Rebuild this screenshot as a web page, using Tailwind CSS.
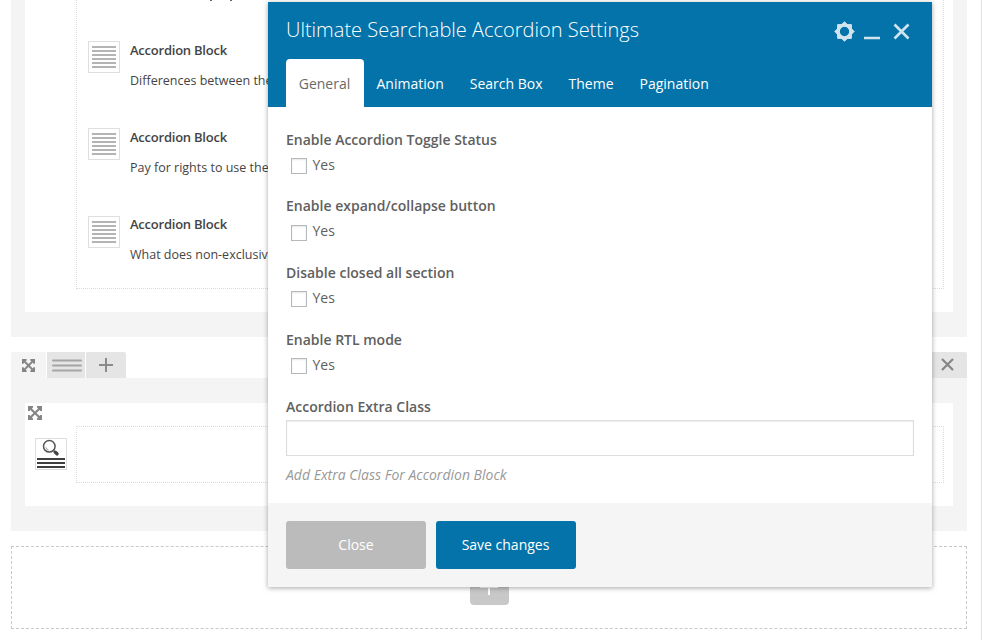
<!DOCTYPE html>
<html lang="en">
<head>
<meta charset="utf-8">
<title>Ultimate Searchable Accordion Settings</title>
<script src="https://cdn.jsdelivr.net/npm/@tailwindcss/browser@4"></script>
</head>
<body class="bg-white">
<svg class="hidden" aria-hidden="true">
  <symbol id="lines" viewBox="0 0 24 22"><path d="M0 1h24M0 5h24M0 9h24M0 13h24M0 17h24M0 21h24" stroke="#b4b4b4" stroke-width="2"/></symbol>
  <symbol id="move" viewBox="0 0 14 14"><path d="M0 0h5v1.600L3.900 2.400 7 5.500l3.100-3.100L9 1.600V0h5v5h-1.600l-.8-1.100L8.500 7l3.100 3.100.8-1.100H14v5H9v-1.600l1.100-.8L7 8.500l-3.100 3.100 1.100.8V14H0V9h1.600l.8 1.100L5.500 7 2.400 3.900 1.600 5H0z" fill="#858585"/></symbol>
</svg>
<div class="relative h-[640px] w-[983px] overflow-hidden font-['Open_Sans','Noto_Sans',sans-serif] text-[#444]">
  <main class="flex h-[640px] w-[982px] flex-col border-r border-[#e2e2e2] pr-[14px] pl-[11px]">
    <!-- Accordion row -->
    <section class="h-[337px] shrink-0 bg-[#f4f4f4] px-[14px] pb-[25px]">
      <div class="h-[312px] bg-white pr-[9px] pl-[51px]">
        <div class="h-[289px] border border-t-0 border-dotted border-[#dcdcdc] pl-[11px]">
          <div class="flex h-[41px] items-start gap-[18px] pl-[122px]"><i class="h-px w-[2px] bg-[#666]"></i><i class="h-px w-[2px] bg-[#666]"></i></div>
          <article class="flex h-[87px] gap-[10px]">
            <span class="flex size-8 shrink-0 items-center justify-center border border-[#dedede]"><svg class="h-[22px] w-6"><use href="#lines"/></svg></span>
            <div class="text-[13px] leading-5 whitespace-nowrap"><h4 class="-mt-px mb-[11px] font-semibold tracking-[-0.018em] text-[#444]">Accordion Block</h4><p class="text-[12.500px]">Differences between the</p></div>
          </article>
          <article class="flex h-[87px] gap-[10px]">
            <span class="flex size-8 shrink-0 items-center justify-center border border-[#dedede]"><svg class="h-[22px] w-6"><use href="#lines"/></svg></span>
            <div class="text-[13px] leading-5 whitespace-nowrap"><h4 class="-mt-px mb-[11px] font-semibold tracking-[-0.018em] text-[#444]">Accordion Block</h4><p class="text-[12.500px]">Pay for rights to use the</p></div>
          </article>
          <article class="flex gap-[10px]">
            <span class="mt-px flex size-8 shrink-0 items-center justify-center border border-[#dedede]"><svg class="h-[22px] w-6"><use href="#lines"/></svg></span>
            <div class="text-[13px] leading-5 whitespace-nowrap"><h4 class="-mt-px mb-[11px] font-semibold tracking-[-0.018em] text-[#444]">Accordion Block</h4><p class="text-[12.500px]">What does non-exclusiv</p></div>
          </article>
        </div>
      </div>
    </section>
    <!-- Search row controls -->
    <div class="mt-[15px] flex h-[26px] shrink-0 gap-px">
      <span class="flex w-[35px] items-center justify-center rounded-t-[2px] bg-[#f4f4f4]"><svg class="size-[13px]"><use href="#move"/></svg></span>
      <span class="flex w-[38px] items-center justify-center bg-[#e5e5e5]"><svg class="ml-[2px] h-[13px] w-[30px]" viewBox="0 0 30 13"><path d="M1 1.500h28M1 6.500h28M1 11.500h28" stroke="#a5a5a5" stroke-width="2" stroke-linecap="round"/></svg></span>
      <span class="flex w-10 items-center justify-center rounded-tr-[2px] bg-[#e5e5e5]"><svg class="size-[14px]" viewBox="0 0 14 14"><path d="M7 0v14M0 7h14" stroke="#8b8b8b" stroke-width="2"/></svg></span>
      <span class="ml-auto flex w-10 items-center justify-center rounded-t-[2px] bg-[#e5e5e5]"><svg class="-mt-px size-[13px]" viewBox="0 0 13 13"><path d="M1 1l11 11M12 1 1 12" stroke="#858585" stroke-width="2.200"/></svg></span>
    </div>
    <section class="h-[153px] shrink-0 bg-[#f4f4f4] px-[14px] pt-[25px]">
      <div class="flex h-[103px] bg-white pr-[9px]">
        <div class="w-[51px] pt-[3px] pl-[3px]">
          <svg class="size-[14px]"><use href="#move"/></svg>
          <span class="mt-[18px] ml-[7px] block size-8 border border-[#dedede]"><svg class="size-[30px]" viewBox="0 0 30 30" fill="none"><circle cx="13.300" cy="7.300" r="5.800" stroke="#555" stroke-width="1.500"/><path d="M9.800 8.300q.7 2 2.700 2.700" stroke="#999"/><path d="m17.500 11.500 1.500 1.500" stroke="#555" stroke-width="1.300"/><path d="m19.300 13.300 1.700 1.500" stroke="#444" stroke-width="3.500" stroke-linecap="round"/><path d="M1 20h28M1 24h28M1 28h28" stroke="#3f3f3f" stroke-width="2"/></svg></span>
        </div>
        <div class="mt-[23px] h-[57px] flex-1 border border-dotted border-[#dcdcdc]"></div>
      </div>
    </section>
    <!-- Add element area -->
    <div class="mt-[15px] flex h-[83px] shrink-0 justify-center border border-dashed border-[#c9c9c9]">
      <span class="mt-[19px] flex h-[39px] w-[39px] items-center justify-center rounded-[4px] bg-[#c8c8c8]"><svg class="size-[18px]" viewBox="0 0 18 18"><path d="M9 0v18M0 10h18" stroke="#fff" stroke-width="2"/></svg></span>
    </div>
  </main>

  <!-- Settings dialog -->
  <div role="dialog" class="absolute top-[2px] left-[268px] flex h-[585px] w-[664px] flex-col bg-white text-sm text-[#606060] shadow-[0_1px_5px_rgba(0,0,0,0.35)]">
    <header class="h-[105px] shrink-0 bg-[#0473aa] px-[18px] text-white">
      <div class="flex h-[57px]">
        <h2 class="pt-[12px] text-[20px] leading-8 font-light whitespace-nowrap">Ultimate Searchable Accordion Settings</h2>
        <div class="ml-auto flex pt-[19px] text-[#d0e4ef]">
          <svg class="size-[21px]" viewBox="-10.500 -10.500 21 21"><path fill="none" stroke="currentColor" stroke-width="3.400" d="M0-6.400a6.400 6.400 0 1 0 0 12.800a6.400 6.400 0 1 0 0-12.800z"/><path fill="currentColor" fill-rule="evenodd" stroke="currentColor" stroke-width="1" stroke-linejoin="round" d="M0-9.700 2.800-6.900 6.900-6.900 6.900-2.800 9.700 0 6.900 2.800 6.900 6.900 2.800 6.900 0 9.700-2.800 6.900-6.900 6.900-6.900 2.800-9.700 0-6.900-2.800-6.900-6.900-2.800-6.900zM0-5.400a5.400 5.400 0 1 0 0 10.800a5.400 5.400 0 1 0 0-10.800z"/></svg>
          <svg class="ml-[9px] h-[21px] w-[16px]" viewBox="0 0 16 21"><path d="M0 17h16" stroke="currentColor" stroke-width="2.500"/></svg>
          <svg class="mt-[1.500px] mr-[4.500px] ml-[12.500px] h-[17px] w-[17px]" viewBox="0 0 17 17"><path d="m1.500 1.500 14 14m0-14-14 14" stroke="currentColor" stroke-width="2.700"/></svg>
        </div>
      </div>
      <nav class="flex h-12 leading-[50px]">
        <a class="w-[78px] rounded-t-[4px] bg-white pr-px text-center text-[#6a6a6a]">General</a>
        <a class="pr-[26px] pl-[12.500px] font-medium">Animation</a>
        <a class="pr-[26px] font-medium">Search Box</a>
        <a class="pr-[26px] font-medium">Theme</a>
        <a class="font-medium">Pagination</a>
      </nav>
    </header>
    <div class="h-[396px] shrink-0 px-[18px] pt-[23px]">
      <div class="h-[66px]"><h3 class="leading-5 font-semibold">Enable Accordion Toggle Status</h3><label class="flex h-[31px] items-start pl-[5px] leading-5"><i class="mt-[8px] mr-[5.500px] size-4 border border-[#b4b9be] shadow-[inset_0_1px_2px_rgba(0,0,0,0.1)]"></i><span class="mt-[5px]">Yes</span></label></div>
      <div class="h-[67px]"><h3 class="leading-5 font-semibold">Enable expand/collapse button</h3><label class="flex h-[31px] items-start pl-[5px] leading-5"><i class="mt-[9px] mr-[5.500px] size-4 border border-[#b4b9be] shadow-[inset_0_1px_2px_rgba(0,0,0,0.1)]"></i><span class="mt-[5px]">Yes</span></label></div>
      <div class="h-[67px]"><h3 class="leading-5 font-semibold">Disable closed all section</h3><label class="flex h-[31px] items-start pl-[5px] leading-5"><i class="mt-[8px] mr-[5.500px] size-4 border border-[#b4b9be] shadow-[inset_0_1px_2px_rgba(0,0,0,0.1)]"></i><span class="mt-[5px]">Yes</span></label></div>
      <div class="h-[67px]"><h3 class="leading-5 font-semibold">Enable RTL mode</h3><label class="flex h-[31px] items-start pl-[5px] leading-5"><i class="mt-[8px] mr-[5.500px] size-4 border border-[#b4b9be] shadow-[inset_0_1px_2px_rgba(0,0,0,0.1)]"></i><span class="mt-[5px]">Yes</span></label></div>
      <h3 class="leading-5 font-semibold">Accordion Extra Class</h3>
      <input type="text" class="mt-[3px] block h-9 w-full border border-[#ddd] bg-white shadow-[inset_0_1px_2px_rgba(0,0,0,0.07)]">
      <p class="mt-[9px] leading-5 text-[#999] italic">Add Extra Class For Accordion Block</p>
    </div>
    <footer class="flex flex-1 gap-[10px] bg-[#f5f5f5] p-[18px] text-white">
      <button class="h-12 w-[140px] rounded-[3px] bg-[#bbb]">Close</button>
      <button class="h-12 w-[140px] rounded-[3px] bg-[#0473aa] pr-px font-medium">Save changes</button>
    </footer>
  </div>
</div>
</body>
</html>
